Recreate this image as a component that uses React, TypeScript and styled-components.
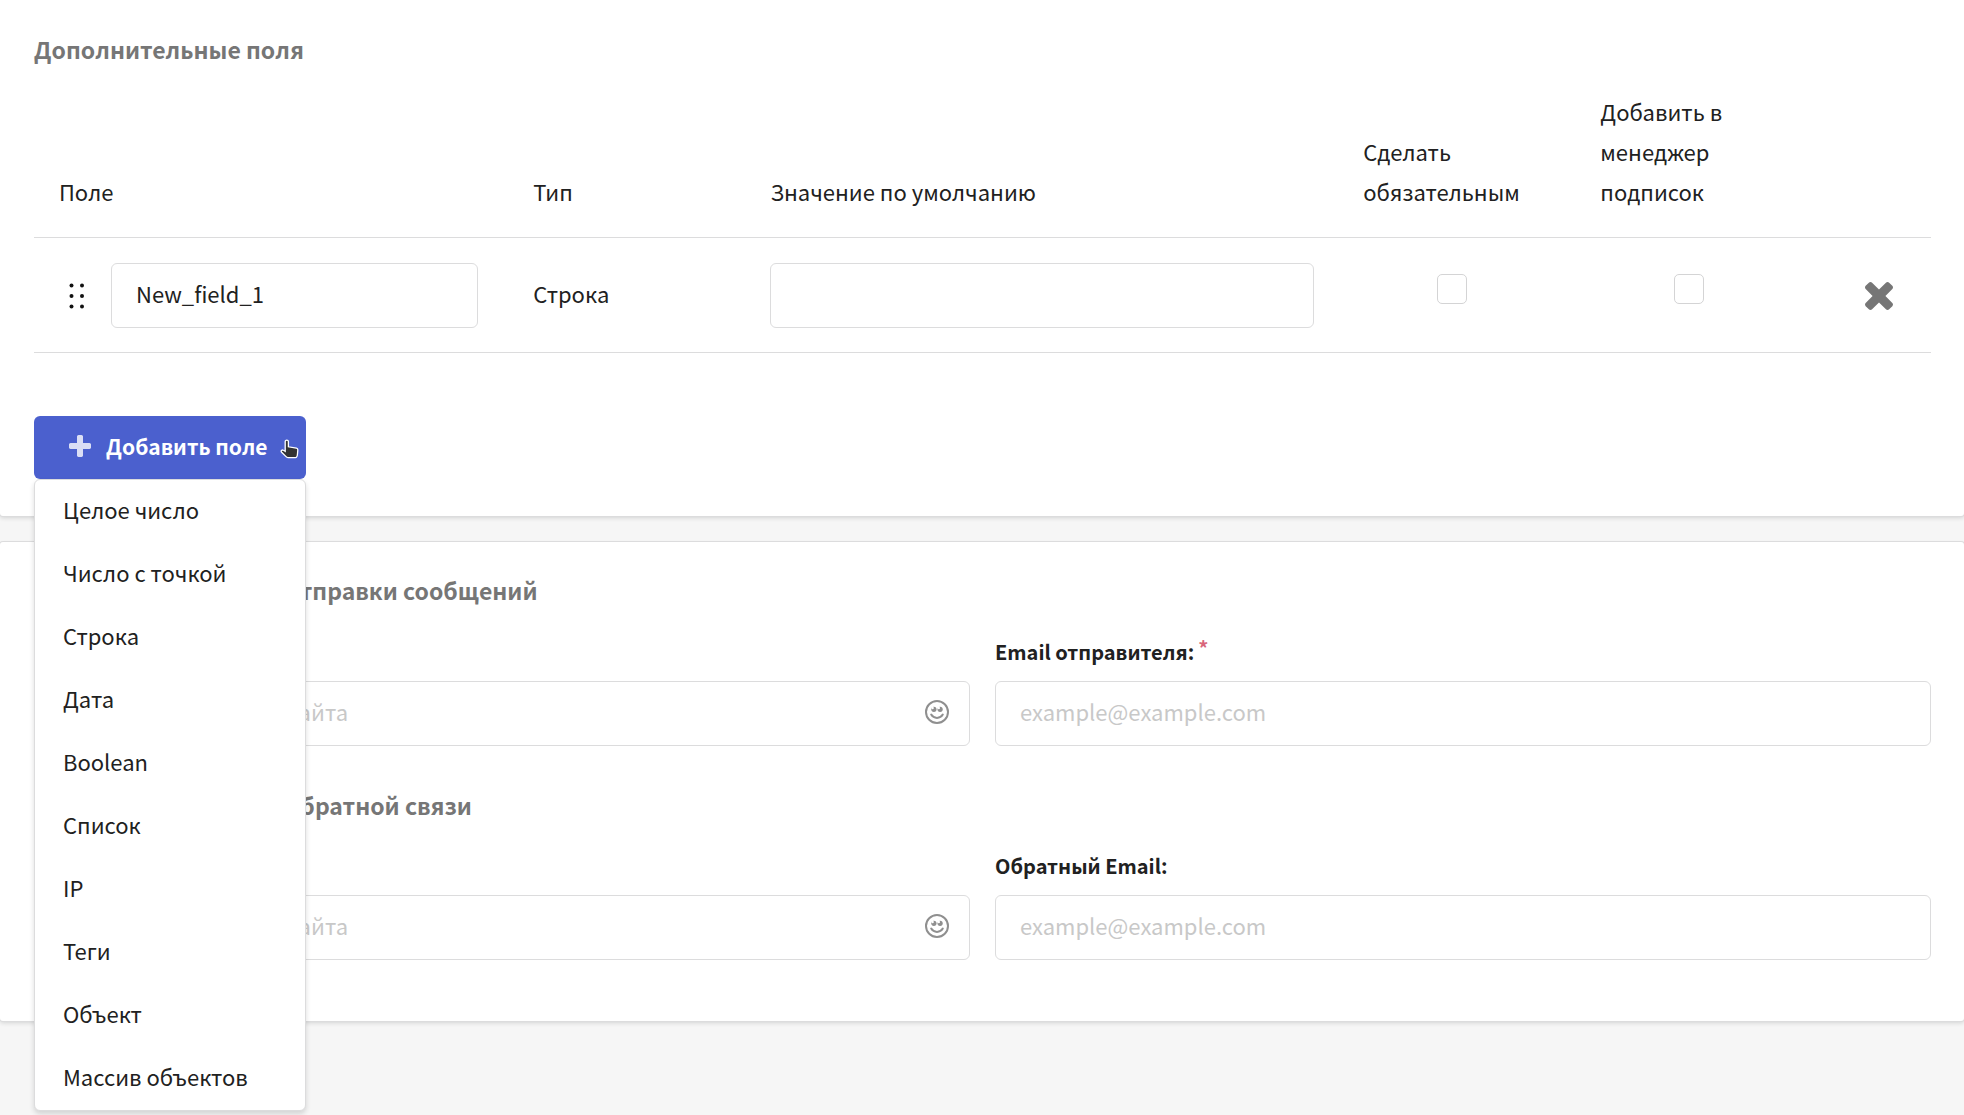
import React, { useState } from 'react';
import styled, { createGlobalStyle } from 'styled-components';

const GlobalStyle = createGlobalStyle`
  *, *::before, *::after { box-sizing: border-box; }
  body { margin: 0; background: #f6f6f6; }
  body, button, input {
    font-family: "Noto Sans CJK SC", "Noto Sans", sans-serif;
    font-size: 22px;
    line-height: 40px;
    color: #212121;
  }
`;

const Page = styled.main`
  display: flex;
  flex-direction: column;
  gap: 26px;
  min-height: 100vh;
  overflow-x: hidden;
`;

const Card = styled.section`
  padding: 28px 33px 61px 34px;
  background: #fff;
  border-radius: 3px;
  box-shadow: 0 0 0 1px #dcdcdd, 0 2px 4px 0 rgba(34, 36, 38, 0.16);
`;

const FieldsCard = styled(Card)`
  padding: 29px 33px 37px 34px;
  border-radius: 0 0 3px 3px;
`;

const Title = styled.h2`
  margin: 0;
  font-size: 23px;
  font-weight: 700;
  line-height: 40px;
  color: #767676;
`;

const Table = styled.table`
  width: 100%;
  margin: 22px 0 63px;
  border-collapse: collapse;
  table-layout: fixed;
`;

const HeadCell = styled.th<{ $width: string }>`
  width: ${(p) => p.$width};
  padding: 0 25px 26px;
  border-bottom: 1px solid #dcdcdd;
  font-weight: 400;
  text-align: left;
  vertical-align: bottom;
`;

const Cell = styled.td`
  padding: 25px 24px 24px 25px;
  border-bottom: 1px solid #dcdcdd;
  vertical-align: middle;
`;

const CellText = styled.div`
  padding-bottom: 5px;
`;

const NameEditor = styled.div`
  display: flex;
  align-items: center;
  padding-right: 6px;
`;

const IconButton = styled.button`
  display: flex;
  flex: none;
  padding: 0;
  border: 0;
  background: none;
  cursor: pointer;
`;

const DragHandle = styled(IconButton)`
  width: 52px;
  padding-left: 10px;
  cursor: grab;
`;

const RemoveButton = styled(IconButton)`
  margin: 0 14px 0 auto;
`;

const TextInput = styled.input<{ $withIcon?: boolean }>`
  display: block;
  width: 100%;
  min-width: 0;
  height: 65px;
  padding: 0 ${(p) => (p.$withIcon ? '60px' : '24px')} 5px 24px;
  border: 1px solid #dcdcdd;
  border-radius: 6px;
  background: #fff;
  outline: none;
  &::placeholder { color: #c8c8c8; opacity: 1; }
`;

const CheckBox = styled.input`
  appearance: none;
  display: block;
  width: 30px;
  height: 30px;
  margin: 0 auto 14px;
  border: 1px solid #d4d4d5;
  border-radius: 5px;
  background: #fff;
  &:checked { background: #4b60ce; }
`;

const CheckArea = styled.div`
  padding-right: 11px;
`;

const Dropdown = styled.div`
  position: relative;
  width: 272px;
`;

const AddButton = styled.button`
  display: flex;
  align-items: center;
  gap: 15px;
  width: 100%;
  height: 63px;
  padding: 0 35px 4px;
  border: 0;
  border-radius: 6px;
  background: #4b60ce;
  color: #fff;
  font-size: 21px;
  font-weight: 700;
  white-space: nowrap;
  cursor: pointer;
  svg { flex: none; }
`;

const Menu = styled.ul`
  position: absolute;
  z-index: 2;
  top: 100%;
  left: 0;
  width: 100%;
  margin: 0;
  padding: 0;
  border: 1px solid #dcdcdd;
  border-radius: 6px;
  background: #fff;
  box-shadow: 0 3px 5px 0 rgba(34, 36, 38, 0.16);
  list-style: none;
`;

const MenuItem = styled.button`
  display: block;
  width: 100%;
  height: 63px;
  padding: 0 28px 5px;
  border: 0;
  background: none;
  text-align: left;
  white-space: nowrap;
  cursor: pointer;
`;

const Pointer = styled.svg`
  position: absolute;
  z-index: 3;
  top: 23px;
  right: 6px;
  pointer-events: none;
`;

const FieldGrid = styled.div`
  display: grid;
  grid-template-columns: 1fr 1fr;
  gap: 25px;
  margin: 22px 0 39px;
  &:last-child { margin: 21px 0 0; }
`;

const Field = styled.div`
  display: flex;
  flex-direction: column;
  gap: 9px;
`;

const Label = styled.label`
  font-size: 20px;
  font-weight: 700;
`;

const Required = styled.sup`
  margin-left: 4px;
  font-size: 20px;
  line-height: 0;
  font-weight: 700;
  vertical-align: 4px;
  color: #d9667b;
`;

const InputWrap = styled.div`
  position: relative;
`;

const EmojiButton = styled(IconButton)`
  position: absolute;
  top: 18px;
  right: 20px;
`;

const PLUS =
  'M1600 736v192q0 40-28 68t-68 28h-416v416q0 40-28 68t-68 28h-192q-40 0-68-28t-28-68v-416h-416q-40 0-68-28t-28-68v-192q0-40 28-68t68-28h416v-416q0-40 28-68t68-28h192q40 0 68 28t28 68v416h416q40 0 68 28t28 68z';
const CROSS =
  'M1490 1322q0 40-28 68l-136 136q-28 28-68 28t-68-28l-294-294-294 294q-28 28-68 28t-68-28l-136-136q-28-28-28-68t28-68l294-294-294-294q-28-28-28-68t28-68l136-136q28-28 68-28t68 28l294 294 294-294q28-28 68-28t68 28l136 136q28 28 28 68t-28 68l-294 294 294 294q28 28 28 68z';

const DotsIcon = () => (
  <svg width="16" height="26" viewBox="0 0 16 26" fill="#111">
    {[2.5, 13, 23.5].map((y) => (
      <React.Fragment key={y}>
        <circle cx="2.5" cy={y} r="2" />
        <circle cx="13" cy={y} r="2" />
      </React.Fragment>
    ))}
  </svg>
);

const SmileIcon = () => (
  <svg width="26" height="26" viewBox="0 0 26 26" fill="none" stroke="#8f8f8f">
    <circle cx="13" cy="13" r="11" strokeWidth="2" />
    <path d="M7.2 15.6c1.3 2.2 3.4 3.3 5.8 3.3s4.5-1.1 5.8-3.3" strokeWidth="2" strokeLinecap="round" />
    <circle cx="9.9" cy="10.3" r="2.6" fill="#8f8f8f" stroke="none" />
    <circle cx="16.1" cy="10.3" r="2.6" fill="#8f8f8f" stroke="none" />
    <circle cx="8.6" cy="9" r="1.2" fill="#fff" stroke="none" />
    <circle cx="14.8" cy="9" r="1.2" fill="#fff" stroke="none" />
  </svg>
);

const COLUMNS = [
  { title: 'Поле', width: '25%' },
  { title: 'Тип', width: '12.5%' },
  { title: 'Значение по умолчанию', width: '31.25%' },
  { title: 'Сделать обязательным', width: '12.5%' },
  { title: 'Добавить в менеджер подписок', width: '12.5%' },
  { title: '', width: '6.25%' },
];

const TYPES = [
  'Целое число', 'Число с точкой', 'Строка', 'Дата', 'Boolean',
  'Список', 'IP', 'Теги', 'Объект', 'Массив объектов',
];

const SECTIONS = [
  { id: 'sender', title: 'Настройки email для отправки сообщений', name: 'Имя отправителя:', email: 'Email отправителя:', required: true },
  { id: 'reply', title: 'Настройки email для обратной связи', name: 'Обратное имя:', email: 'Обратный Email:', required: false },
];

export default function App() {
  const [name, setName] = useState('New_field_1');
  const [open, setOpen] = useState(true);

  return (
    <Page>
      <GlobalStyle />
      <FieldsCard>
        <Title>Дополнительные поля</Title>
        <Table>
          <thead>
            <tr>
              {COLUMNS.map((c) => (
                <HeadCell key={c.width + c.title} $width={c.width}>{c.title}</HeadCell>
              ))}
            </tr>
          </thead>
          <tbody>
            <tr>
              <Cell>
                <NameEditor>
                  <DragHandle type="button" aria-label="Переместить"><DotsIcon /></DragHandle>
                  <TextInput aria-label="Поле" value={name} onChange={(e) => setName(e.target.value)} />
                </NameEditor>
              </Cell>
              <Cell><CellText>Строка</CellText></Cell>
              <Cell><TextInput aria-label="Значение по умолчанию" /></Cell>
              <Cell><CheckArea><CheckBox type="checkbox" aria-label="Сделать обязательным" /></CheckArea></Cell>
              <Cell><CheckArea><CheckBox type="checkbox" aria-label="Добавить в менеджер подписок" /></CheckArea></Cell>
              <Cell>
                <RemoveButton type="button" aria-label="Удалить">
                  <svg width="28" height="28" viewBox="302 366 1188 1188" fill="#767676"><path d={CROSS} /></svg>
                </RemoveButton>
              </Cell>
            </tr>
          </tbody>
        </Table>
        <Dropdown>
          <AddButton type="button" aria-expanded={open} onClick={() => setOpen(!open)}>
            <svg width="22" height="22" viewBox="192 128 1408 1408" fill="#fff" fillOpacity="0.8"><path d={PLUS} /></svg>
            Добавить поле
          </AddButton>
          <Pointer width="20" height="22" viewBox="0 0 20 22">
            <path
              d="M5.2 2.6c0-2 3.2-2 3.2 0v5.2l8 1.4c1 .2 1.5.9 1.4 1.900l-.3 3.600c-.1 1.500-.8 3.900-2 3.900H8c-1 0-1.600-.5-2.200-1.200l-4.200-4.200c-1.200-1.400.5-2.700 1.800-1.900l1.800 1z"
              fill="#333"
              stroke="#fff"
              strokeWidth="1.3"
            />
          </Pointer>
          {open && (
            <Menu>
              {TYPES.map((t) => (
                <li key={t}><MenuItem type="button">{t}</MenuItem></li>
              ))}
            </Menu>
          )}
        </Dropdown>
      </FieldsCard>
      <Card>
        {SECTIONS.map((s) => (
          <React.Fragment key={s.id}>
            <Title>{s.title}</Title>
            <FieldGrid>
              <Field>
                <Label htmlFor={`${s.id}-name`}>{s.name}</Label>
                <InputWrap>
                  <TextInput id={`${s.id}-name`} placeholder="Название компании, сайта" $withIcon />
                  <EmojiButton type="button" aria-label="Эмодзи"><SmileIcon /></EmojiButton>
                </InputWrap>
              </Field>
              <Field>
                <Label htmlFor={`${s.id}-email`}>
                  {s.email}
                  {s.required && <Required>*</Required>}
                </Label>
                <TextInput id={`${s.id}-email`} type="email" placeholder="example@example.com" />
              </Field>
            </FieldGrid>
          </React.Fragment>
        ))}
      </Card>
    </Page>
  );
}
